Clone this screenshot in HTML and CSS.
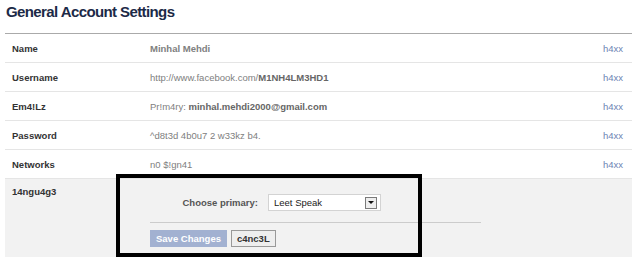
FILE: index.html
```html
<!DOCTYPE html>
<html lang="en">
<head>
    <meta charset="UTF-8">
    <title>General Account Settings</title>
    <link rel="stylesheet" href="styles.css">
</head>
<body>
    <div class="page">
        <h2 class="title">General Account Settings</h2>
        <div class="settings">
            <div class="row">
                <div class="label">Name</div>
                <div class="value"><b>Minhal Mehdi</b></div>
                <a class="edit">h4xx</a>
            </div>
            <div class="row">
                <div class="label">Username</div>
                <div class="value">http://www.facebook.com/<b class="dark">M1NH4LM3HD1</b></div>
                <a class="edit">h4xx</a>
            </div>
            <div class="row">
                <div class="label">Em4!Lz</div>
                <div class="value">Pr!m4ry: <b class="dark">minhal.mehdi2000@gmail.com</b></div>
                <a class="edit">h4xx</a>
            </div>
            <div class="row">
                <div class="label">Password</div>
                <div class="value">^d8t3d 4b0u7 2 w33kz b4.</div>
                <a class="edit">h4xx</a>
            </div>
            <div class="row last">
                <div class="label">Networks</div>
                <div class="value">n0 $!gn41</div>
                <a class="edit">h4xx</a>
            </div>
            <div class="row open">
                <div class="label">14ngu4g3</div>
                <div class="edit-form">
                    <div class="field">
                        <span class="field-label">Choose primary:</span>
                        <span class="select">
                            <span class="select-text">Leet Speak</span>
                            <span class="select-btn"><i></i></span>
                        </span>
                    </div>
                    <div class="actions">
                        <span class="btn btn-save">Save Changes</span>
                        <span class="btn btn-cancel">c4nc3L</span>
                    </div>
                </div>
            </div>
        </div>
        <!-- highlight box drawn over the screenshot -->
        <div class="highlight"></div>
    </div>
</body>
</html>
```

FILE: styles.css
```css
* {
    margin: 0;
    padding: 0;
    box-sizing: border-box;
}
body {
    background: #ffffff;
    font-family: "Liberation Sans", Arial, sans-serif;
    font-size: 9.5px;
    color: #333333;
}
.page {
    position: relative;
    width: 632px;
    padding-left: 5px;
}
.title {
    height: 33px;
    padding: 2px 0 0 1px;
    font-size: 15px;
    line-height: 19px;
    letter-spacing: -0.6px;
    font-weight: bold;
    color: #1c2a47;
}
.settings {
    border-top: 1px solid #aaaaaa;
}
/* Rows */
.row {
    display: flex;
    align-items: center;
    height: 29px;
    border-bottom: 1px solid #e5e5e5;
    padding: 0 9px 0 7px;
}
.label {
    width: 138px;
    font-weight: bold;
    color: #333333;
}
.value {
    flex: 1;
    color: #808080;
}
.value .dark {
    color: #666666;
}
.edit {
    color: #6d84b4;
}
/* Open language row */
.row.open {
    height: 78px;
    align-items: flex-start;
    background: #f2f2f2;
    border-bottom: none;
    padding-top: 7px;
}
.edit-form {
    width: 331px;
}
.field {
    display: flex;
    align-items: center;
    padding: 8px 0 11px 0;
    border-bottom: 1px solid #cccccc;
}
.field-label {
    width: 108px;
    white-space: nowrap;
    text-align: right;
    font-weight: bold;
    color: #555555;
    margin-right: 10px;
}
.select {
    display: flex;
    align-items: center;
    justify-content: space-between;
    width: 113px;
    height: 17px;
    background: #ffffff;
    border: 1px solid #d3d3d3;
    padding: 0 3px 0 5px;
    color: #222222;
}
.select-btn {
    display: flex;
    align-items: center;
    justify-content: center;
    width: 12px;
    height: 12px;
    border: 1px solid #7a7a7a;
    background: #eeeeee;
}
.select-btn i {
    width: 0;
    height: 0;
    border-left: 3px solid transparent;
    border-right: 3px solid transparent;
    border-top: 3px solid #111111;
}
.actions {
    display: flex;
    gap: 4px;
    padding-top: 7px;
}
.btn {
    height: 17px;
    line-height: 15px;
    padding: 0 5px;
    white-space: nowrap;
    font-weight: bold;
    border: 1px solid;
}
.btn-save {
    background: #a2b1d1;
    border-color: #a2b1d1;
    color: #ffffff;
}
.btn-cancel {
    background: #eeeeee;
    border-color: #999999;
    color: #333333;
}
/* Black annotation rectangle */
.highlight {
    position: absolute;
    left: 116px;
    top: 174px;
    width: 306px;
    height: 83px;
    border: 4px solid #000000;
}
```
